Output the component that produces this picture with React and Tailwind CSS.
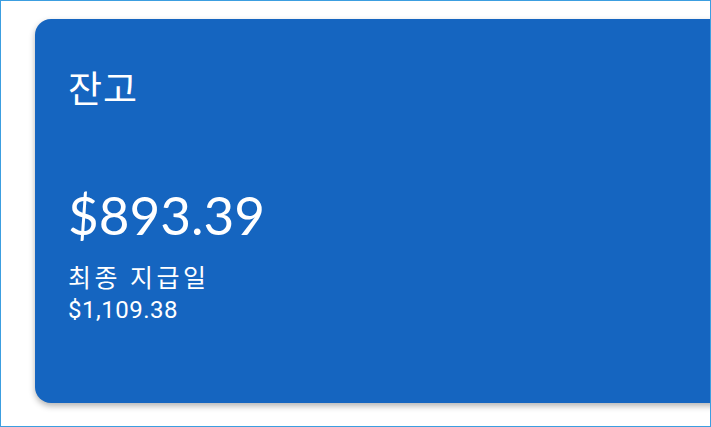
export default function App() {
  return (
    <div className="w-[711px] h-[427px] overflow-hidden bg-white border border-[#3c9ee0] pt-[18px] pl-[34px]">
      <div className="w-[720px] h-[384px] rounded-[16px] bg-[#1565c0] shadow-[0_3px_6px_rgba(0,0,0,0.3)] text-white pl-[33px] pt-[48px] flex flex-col">
        <div className="text-[37px] leading-[40px] tracking-[1px] font-['Noto_Sans_CJK_KR',sans-serif]">잔고</div>
        <div className="mt-[78px] text-[53px] leading-[60px] font-['Lato','Noto_Sans_CJK_KR',sans-serif]">$893.39</div>
        <div className="mt-[16px] text-[25px] leading-[30px] tracking-[3.5px] font-['Noto_Sans_CJK_KR',sans-serif]">최종 지급일</div>
        <div className="mt-[5px] text-[24px] leading-[28px] tracking-[0.5px] font-['Roboto','Noto_Sans_CJK_KR',sans-serif]">$1,109.38</div>
      </div>
    </div>
  );
}
